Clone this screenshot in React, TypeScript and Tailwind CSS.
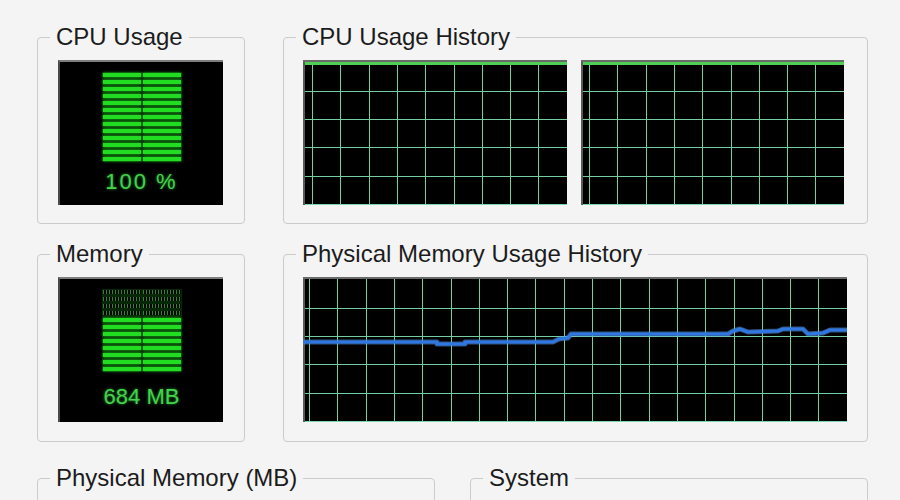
import React from 'react';

type Pt = [number, number];

const memLine: Pt[] = [
  [0, 65], [134, 65], [134, 67], [162, 67], [162, 65], [250, 65], [256, 62], [265, 61],
  [268, 57], [425, 57], [430, 54], [437, 52], [445, 55], [475, 54], [480, 52], [500, 52],
  [505, 57], [520, 56], [527, 53], [544, 53],
];

const GroupBox = ({ title, className, children }: { title: string; className?: string; children?: React.ReactNode }) => (
  <fieldset className={`border border-[#cbcbcb] rounded-[4px] ${className ?? ''}`}>
    <legend className="ml-[12px] px-[6px] text-[24px] leading-[28px] text-[#1c1c1c]">{title}</legend>
    {children}
  </fieldset>
);

const BarRow = ({ dim }: { dim?: boolean }) => (
  <div className="flex gap-[2px]">
    {[0, 1].map((i) =>
      dim ? (
        <span
          key={i}
          className="w-[38px] h-[4px] bg-[repeating-linear-gradient(90deg,#3f9a3f_0px,#3f9a3f_1px,#000_1px,#000_3px)] opacity-80"
        />
      ) : (
        <span key={i} className="w-[38px] h-[4px] bg-[#22dc22] shadow-[0_0_3px_#1fc81f]" />
      )
    )}
  </div>
);

const Meter = ({ dim, lit, label, textGap, tracking }: { dim: number; lit: number; label: string; textGap: string; tracking: string }) => (
  <div className="w-[165px] h-[145px] bg-black border-t-2 border-l-2 border-t-[#7d7d7d] border-l-[#4a4a4a] flex flex-col items-center pt-[10px]">
    <div className="flex flex-col gap-[3px] bg-[#062806] p-[1px]">
      {Array.from({ length: dim }).map((_, i) => (
        <BarRow key={'d' + i} dim />
      ))}
      {Array.from({ length: lit }).map((_, i) => (
        <BarRow key={'l' + i} />
      ))}
    </div>
    <div className={`${textGap} ${tracking} text-[22px] leading-[24px] text-[#46d04e] [text-shadow:0_0_3px_#1f9f2f]`}>
      {label}
    </div>
  </div>
);

const Graph = ({ w, x0, full, line }: { w: number; x0: number; full?: boolean; line?: Pt[] }) => {
  const h = 145;
  const vs: number[] = [];
  for (let x = x0; x < w - 2; x += 28.3) vs.push(Math.round(x) + 0.5);
  const hs = [31, 59, 87, 116].map((y) => y + 0.5);
  return (
    <svg width={w} height={h} className="block bg-black shrink-0">
      {vs.map((x) => (
        <line key={'v' + x} x1={x} y1={0} x2={x} y2={h} stroke="#74cfa0" strokeWidth={1} />
      ))}
      {hs.map((y) => (
        <line key={'h' + y} x1={0} y1={y} x2={w} y2={y} stroke="#74cfa0" strokeWidth={1} />
      ))}
      <line x1={0} y1={h - 0.5} x2={w} y2={h - 0.5} stroke="#7ad6b0" strokeWidth={1} />
      <line x1={1} y1={0} x2={1} y2={h} stroke="#5a5a5a" strokeWidth={2} />
      <line x1={0} y1={1} x2={w} y2={1} stroke="#6a6a6a" strokeWidth={2} />
      {full && <rect x={2} y={2} width={w - 2} height={3} fill="#4fcf55" />}
      {line && (
        <>
          <polyline
            points={line.map((p) => p.join(',')).join(' ')}
            fill="none"
            stroke="#5c9be6"
            strokeWidth={5}
            strokeLinejoin="round"
            opacity={0.55}
          />
          <polyline
            points={line.map((p) => p.join(',')).join(' ')}
            fill="none"
            stroke="#2f78e4"
            strokeWidth={3}
            strokeLinejoin="round"
          />
        </>
      )}
    </svg>
  );
};

export default function App() {
  return (
    <div className="w-[900px] h-[500px] overflow-hidden bg-[#f4f4f4] font-['Liberation_Sans',Arial,sans-serif] pl-[37px] pt-[23px]">
      {/* CPU row */}
      <div className="flex gap-[38px]">
        <GroupBox title="CPU Usage" className="w-[208px] pb-[18px]">
          <div className="mt-[9px] pl-[20px]">
            <Meter dim={0} lit={13} label="100 %" textGap="mt-[8px]" tracking="tracking-[2px]" />
          </div>
        </GroupBox>
        <GroupBox title="CPU Usage History" className="w-[585px] pb-[18px]">
          <div className="mt-[9px] pl-[19px] flex gap-[14px]">
            <Graph w={264} x0={9} full />
            <Graph w={263} x0={8} full />
          </div>
        </GroupBox>
      </div>

      {/* Memory row */}
      <div className="flex gap-[38px] mt-[16px]">
        <GroupBox title="Memory" className="w-[208px] pb-[19px]">
          <div className="mt-[9px] pl-[20px]">
            <Meter dim={4} lit={8} label="684 MB" textGap="mt-[13px]" tracking="tracking-[0px]" />
          </div>
        </GroupBox>
        <GroupBox title="Physical Memory Usage History" className="w-[585px] pb-[19px]">
          <div className="mt-[9px] pl-[19px]">
            <Graph w={544} x0={6} line={memLine} />
          </div>
        </GroupBox>
      </div>

      {/* Bottom row, cut off */}
      <div className="flex gap-[35px] mt-[22px]">
        <GroupBox title="Physical Memory (MB)" className="w-[398px] h-[120px]" />
        <GroupBox title="System" className="w-[398px] h-[120px]" />
      </div>
    </div>
  );
}
